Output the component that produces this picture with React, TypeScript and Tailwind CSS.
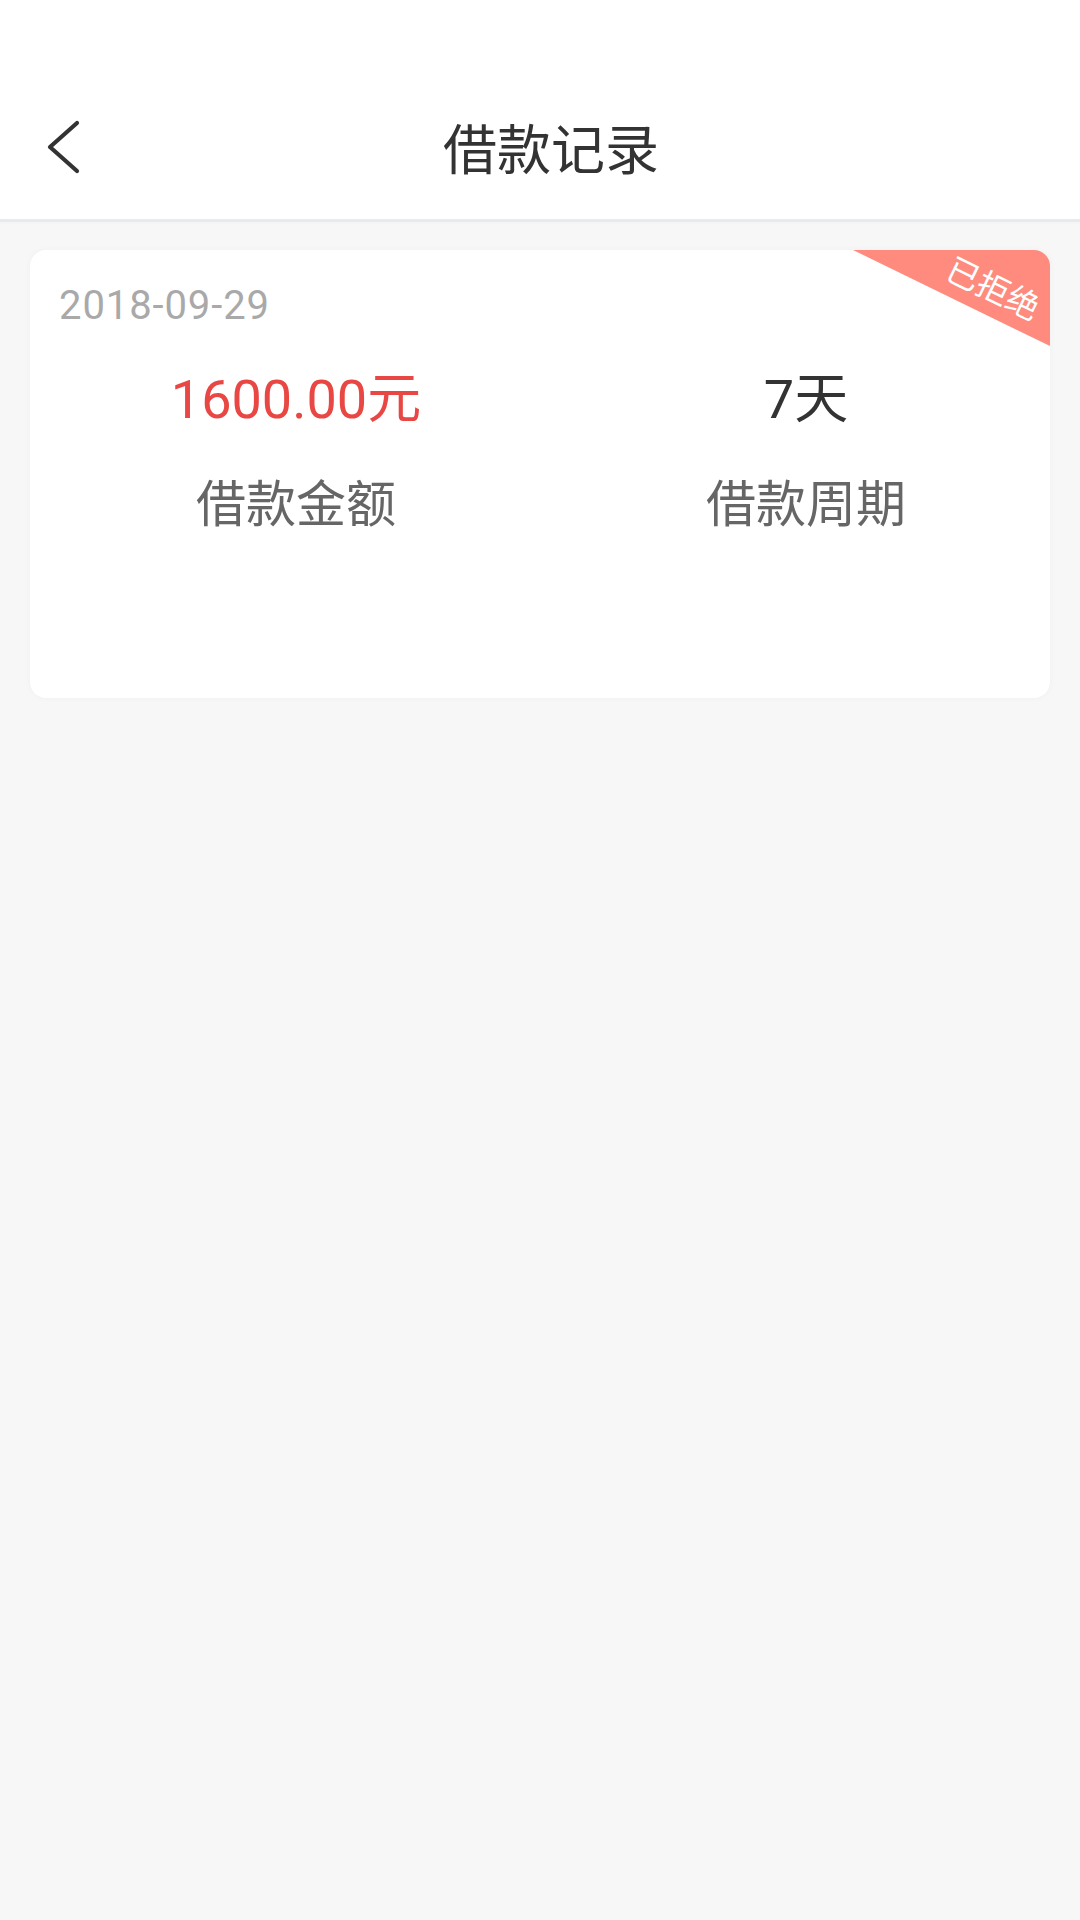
import React from "react";

export default function App() {
  return (
    <div className="w-[1080px] min-h-[1920px] bg-[#f7f7f7] font-['Roboto','Noto_Sans_CJK_SC',sans-serif]">
      {/* Header */}
      <div className="h-[222px] bg-white border-b-[3px] border-[#e8ebed] shadow-[0_1px_3px_rgba(0,0,0,0.025)] pt-[75px]">
        <div className="h-[144px] flex items-center">
          <div className="w-[160px] pl-[47px] flex items-center">
            <svg width="34" height="54" viewBox="0 0 34 54" fill="none">
              <path d="M30 3 L3 27 L30 51" stroke="#333333" strokeWidth="4.2" strokeLinecap="round" strokeLinejoin="round" />
            </svg>
          </div>
          <div className="flex-1 mt-[9px] text-center text-[54px] leading-[54px] text-[#333333]">借款记录</div>
          <div className="w-[138px]" />
        </div>
      </div>

      {/* Card */}
      <div className="relative mx-[30px] mt-[28px] h-[448px] rounded-[16px] bg-white overflow-hidden shadow-[0_0_6px_rgba(0,0,0,0.035)]">
        <div className="absolute top-0 right-0 w-[197px] h-[96px] bg-[#fe8b7e] [clip-path:polygon(0_0,100%_0,100%_100%)]">
          <span className="absolute left-[140px] top-[39px] -translate-x-1/2 -translate-y-1/2 rotate-[26deg] text-[33px] leading-[33px] text-white whitespace-nowrap">
            已拒绝
          </span>
        </div>

        <div className="flex flex-col">
          <div className="mt-[36px] pl-[29px] h-[40px] flex items-center text-[40px] leading-[40px] tracking-[0.9px] text-[#a9a9a9]">
            2018-09-29
          </div>
          <div className="ml-[11px] grid grid-cols-[510px_510px] mt-[44px]">
            <div className="h-[60px] flex items-center justify-center text-[54px] leading-[60px] text-[#e84744]">1600.00元</div>
            <div className="h-[60px] flex items-center justify-center text-[54px] leading-[60px] text-[#333333]">7天</div>
          </div>
          <div className="ml-[11px] grid grid-cols-[510px_510px] mt-[45px]">
            <div className="h-[60px] flex items-center justify-center text-[50px] leading-[60px] text-[#666666]">借款金额</div>
            <div className="h-[60px] flex items-center justify-center text-[50px] leading-[60px] text-[#666666]">借款周期</div>
          </div>
        </div>
      </div>
    </div>
  );
}
